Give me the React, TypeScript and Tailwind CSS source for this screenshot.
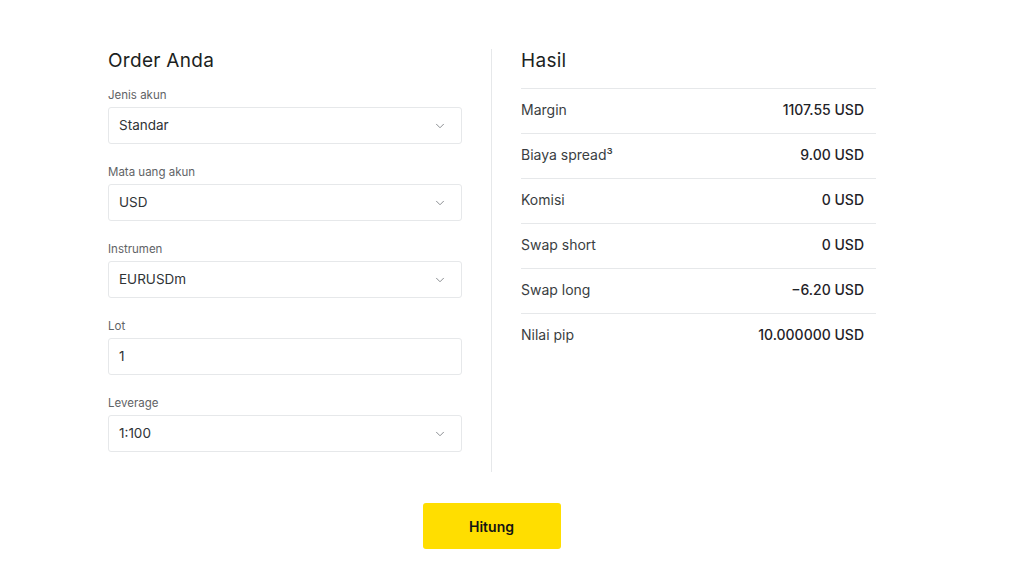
import { ChevronDown } from "lucide-react";

const fields = [
  { label: "Jenis akun", value: "Standar", select: true },
  { label: "Mata uang akun", value: "USD", select: true },
  { label: "Instrumen", value: "EURUSDm", select: true },
  { label: "Lot", value: "1", select: false },
  { label: "Leverage", value: "1:100", select: true },
];

const results = [
  { label: "Margin", value: "1107.55 USD" },
  { label: "Biaya spread³", value: "9.00 USD" },
  { label: "Komisi", value: "0 USD" },
  { label: "Swap short", value: "0 USD" },
  { label: "Swap long", value: "−6.20 USD" },
  { label: "Nilai pip", value: "10.000000 USD" },
];

export default function App() {
  return (
    <div className="min-h-[574px] bg-white text-[#1f2328] font-['Inter',sans-serif]">
      <div className="pl-[108px] pt-[49px]">
        <div className="flex w-[768px]">
          {/* Left Column - Order */}
          <div className="w-[354px] pb-[20px]">
            <h2 className="text-[19px] font-normal leading-[24px] tracking-[0.3px] text-[#1c1f22]">
              Order Anda
            </h2>
            <div className="mt-[15px] flex flex-col gap-[21px]">
              {fields.map((f) => (
                <div key={f.label}>
                  <div className="text-[11.5px] leading-[14px] text-[#5f6366]">
                    {f.label}
                  </div>
                  <div className="mt-[5px] flex h-[37px] items-center justify-between rounded-[3px] border border-[#e6e8ea] pl-[10px] pr-[14px] text-[13.5px] text-[#2f3336]">
                    <span>{f.value}</span>
                    {f.select && (
                      <ChevronDown
                        size={14}
                        strokeWidth={1.5}
                        className="text-[#7a7e82]"
                      />
                    )}
                  </div>
                </div>
              ))}
            </div>
          </div>

          {/* Divider */}
          <div className="mx-[29px] w-px bg-[#e6e8ea]" />

          {/* Right Column - Result */}
          <div className="w-[355px]">
            <h2 className="text-[19px] font-normal leading-[24px] tracking-[0.3px] text-[#1c1f22]">
              Hasil
            </h2>
            <div className="mt-[15px] border-t border-[#e6e8ea]">
              {results.map((r, i) => (
                <div
                  key={r.label}
                  className={`flex h-[45px] items-center justify-between pb-[4px] pr-[12px] text-[14px] ${
                    i < results.length - 1 ? "border-b border-[#e6e8ea]" : ""
                  }`}
                >
                  <span className="text-[#3a3e42]">{r.label}</span>
                  <span className="font-medium text-[#1f2328]">{r.value}</span>
                </div>
              ))}
            </div>
          </div>
        </div>

        <div className="flex w-[768px] justify-center pt-[31px]">
          <button className="ml-[-1px] h-[46px] w-[138px] rounded-[3px] bg-[#ffde00] text-[14px] font-semibold text-[#141414]">
            Hitung
          </button>
        </div>
      </div>
    </div>
  );
}
